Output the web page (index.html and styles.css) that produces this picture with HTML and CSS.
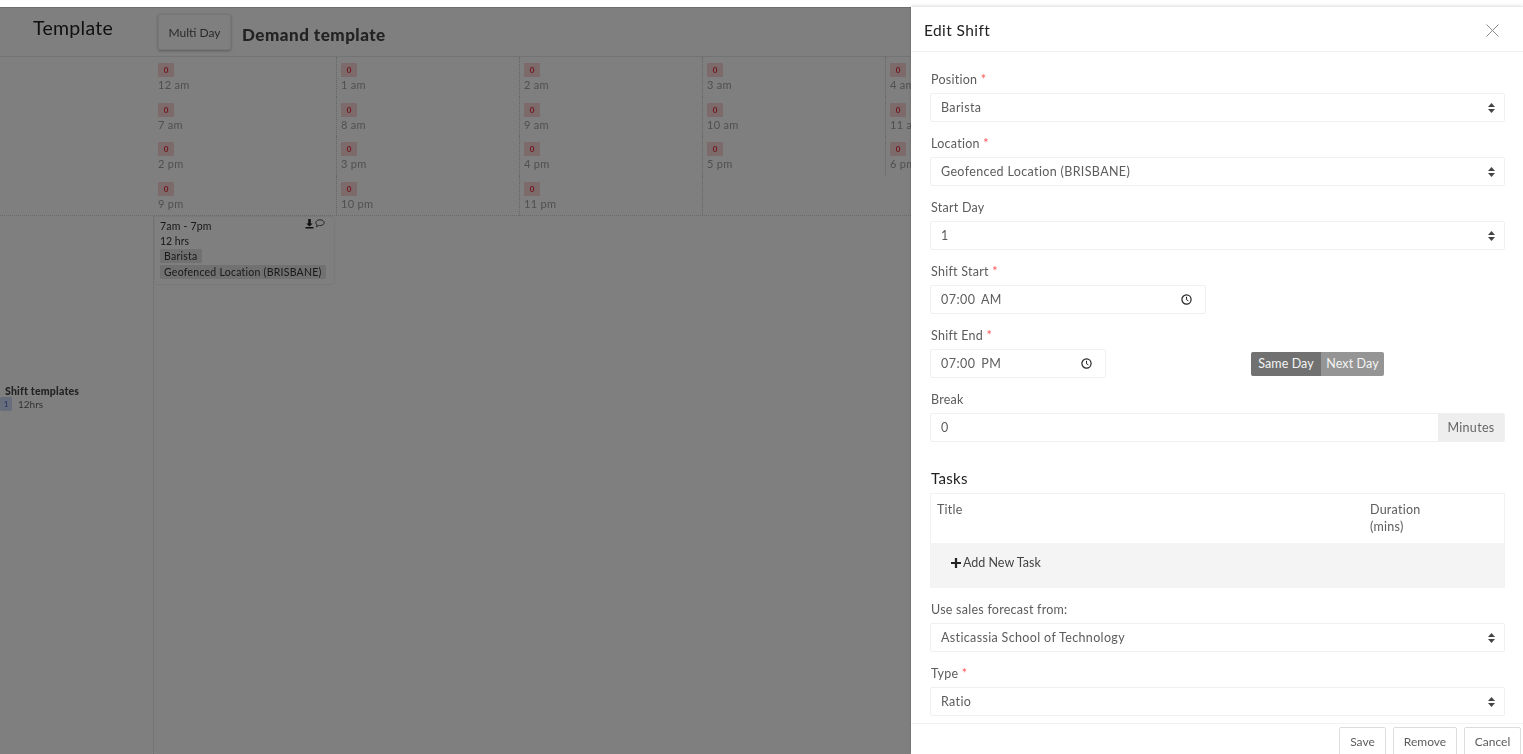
FILE: index.html
```html
<!DOCTYPE html>
<html lang="en">
<head>
    <meta charset="UTF-8">
    <title>Demand template</title>
    <link rel="stylesheet" href="styles.css">
</head>
<body>
<div class="topbar"></div>

<div class="page">
    <div class="head-row">
        <div class="head-title">Template</div>
        <div class="head-main">
            <button class="multi-btn">Multi Day</button>
            <div class="demand-title">Demand template</div>
        </div>
    </div>

    <div class="hours-row">
        <div class="side-cell"></div>
        <div class="hours-grid">
            <div class="hour"><span class="count">0</span><span class="hour-label">12 am</span></div>
            <div class="hour"><span class="count">0</span><span class="hour-label">1 am</span></div>
            <div class="hour"><span class="count">0</span><span class="hour-label">2 am</span></div>
            <div class="hour"><span class="count">0</span><span class="hour-label">3 am</span></div>
            <div class="hour"><span class="count">0</span><span class="hour-label">4 am</span></div>
            <div class="hour"><span class="count">0</span><span class="hour-label">7 am</span></div>
            <div class="hour"><span class="count">0</span><span class="hour-label">8 am</span></div>
            <div class="hour"><span class="count">0</span><span class="hour-label">9 am</span></div>
            <div class="hour"><span class="count">0</span><span class="hour-label">10 am</span></div>
            <div class="hour"><span class="count">0</span><span class="hour-label">11 am</span></div>
            <div class="hour"><span class="count">0</span><span class="hour-label">2 pm</span></div>
            <div class="hour"><span class="count">0</span><span class="hour-label">3 pm</span></div>
            <div class="hour"><span class="count">0</span><span class="hour-label">4 pm</span></div>
            <div class="hour"><span class="count">0</span><span class="hour-label">5 pm</span></div>
            <div class="hour"><span class="count">0</span><span class="hour-label">6 pm</span></div>
            <div class="hour"><span class="count">0</span><span class="hour-label">9 pm</span></div>
            <div class="hour"><span class="count">0</span><span class="hour-label">10 pm</span></div>
            <div class="hour"><span class="count">0</span><span class="hour-label">11 pm</span></div>
        </div>
    </div>

    <div class="shift-row">
        <div class="templates-cell">
            <div class="templates-title">Shift templates</div>
            <div class="templates-item"><span class="tpl-count">1</span>12hrs</div>
        </div>
        <div class="shift-area">
            <div class="shift-card">
                <div class="shift-time">
                    7am - 7pm
                    <span class="shift-icons">
                        <svg width="9" height="10" viewBox="0 0 9 10"><path d="M3.200 0h2.600v4.500h2L4.500 7.500 1.200 4.500h2zM0.500 8h8v1.500h-8z" fill="#222"/></svg>
                        <svg width="10" height="9" viewBox="0 0 10 9"><path d="M5 .8c2.300 0 4.200 1.300 4.200 2.900S7.300 6.600 5 6.600c-.5 0-1 0-1.400-.2L1.500 8l.5-2.100C1.200 5.300.8 4.600.8 3.700.8 2.100 2.700.8 5 .8z" fill="none" stroke="#222" stroke-width=".8"/></svg>
                    </span>
                </div>
                <div class="shift-hrs">12 hrs</div>
                <span class="shift-tag">Barista</span>
                <span class="shift-tag">Geofenced Location (BRISBANE)</span>
            </div>
        </div>
    </div>
</div>

<div class="overlay"></div>

<div class="drawer">
    <div class="drawer-head">
        <div class="drawer-title">Edit Shift</div>
        <svg class="close-x" width="13" height="13" viewBox="0 0 13 13"><path d="M.5.500l12 12M12.500.500l-12 12" stroke="#8a8a8a" stroke-width="1" fill="none"/></svg>
    </div>

    <div class="drawer-body">
        <div class="field">
            <label class="field-label">Position <span class="req">*</span></label>
            <div class="control">Barista
                <svg class="updown" width="7" height="10" viewBox="0 0 7 10"><path d="M3.500 0L7 4H0zM3.500 10L0 6h7z" fill="#444"/></svg>
            </div>
        </div>
        <div class="field">
            <label class="field-label">Location <span class="req">*</span></label>
            <div class="control">Geofenced Location (BRISBANE)
                <svg class="updown" width="7" height="10" viewBox="0 0 7 10"><path d="M3.500 0L7 4H0zM3.500 10L0 6h7z" fill="#444"/></svg>
            </div>
        </div>
        <div class="field">
            <label class="field-label">Start Day</label>
            <div class="control">1
                <svg class="updown" width="7" height="10" viewBox="0 0 7 10"><path d="M3.500 0L7 4H0zM3.500 10L0 6h7z" fill="#444"/></svg>
            </div>
        </div>
        <div class="field">
            <label class="field-label">Shift Start <span class="req">*</span></label>
            <div class="control time-start">07:00 AM
                <svg class="clock" width="11" height="11" viewBox="0 0 11 11"><circle cx="5.500" cy="5.500" r="4.600" fill="none" stroke="#222" stroke-width="1.200"/><path d="M5.500 2.800v2.900l1.900 1.200" fill="none" stroke="#222" stroke-width="1"/></svg>
            </div>
        </div>
        <div class="field">
            <label class="field-label">Shift End <span class="req">*</span></label>
            <div class="end-row">
                <div class="control time-end">07:00 PM
                    <svg class="clock" width="11" height="11" viewBox="0 0 11 11"><circle cx="5.500" cy="5.500" r="4.600" fill="none" stroke="#222" stroke-width="1.200"/><path d="M5.500 2.800v2.900l1.900 1.200" fill="none" stroke="#222" stroke-width="1"/></svg>
                </div>
                <div class="day-toggle">
                    <span class="day-on">Same Day</span>
                    <span class="day-off">Next Day</span>
                </div>
            </div>
        </div>
        <div class="field">
            <label class="field-label">Break</label>
            <div class="input-group">
                <div class="group-value">0</div>
                <div class="group-addon">Minutes</div>
            </div>
        </div>

        <h3 class="tasks-title">Tasks</h3>
        <div class="tasks-table">
            <div class="tasks-head">
                <div>Title</div>
                <div class="tasks-duration">Duration<br>(mins)</div>
            </div>
            <div class="tasks-add">
                <svg width="10" height="10" viewBox="0 0 10 10"><path d="M5 0v10M0 5h10" stroke="#222" stroke-width="2.200"/></svg>
                Add New Task
            </div>
        </div>

        <div class="field">
            <label class="field-label">Use sales forecast from:</label>
            <div class="control">Asticassia School of Technology
                <svg class="updown" width="7" height="10" viewBox="0 0 7 10"><path d="M3.500 0L7 4H0zM3.500 10L0 6h7z" fill="#444"/></svg>
            </div>
        </div>
        <div class="field">
            <label class="field-label">Type <span class="req">*</span></label>
            <div class="control">Ratio
                <svg class="updown" width="7" height="10" viewBox="0 0 7 10"><path d="M3.500 0L7 4H0zM3.500 10L0 6h7z" fill="#444"/></svg>
            </div>
        </div>
    </div>

    <div class="drawer-foot">
        <button class="foot-btn save-btn">Save</button>
        <button class="foot-btn remove-btn">Remove</button>
        <button class="foot-btn cancel-btn">Cancel</button>
    </div>
</div>
</body>
</html>
```

FILE: styles.css
```css
html, body {
    height: 100%;
}

body {
    margin: 0;
    overflow: hidden;
    position: relative;
    background: #fff;
    color: #333;
    font-family: Lato, "Noto Sans", sans-serif;
    font-size: 13px;
    display: flex;
    flex-direction: column;
    filter: blur(.4px);
}

.topbar {
    height: 7px;
    flex: none;
    background: #fff;
}

/* the drawer covers the rest of the page, so stop at its edge */
.page {
    flex: 1;
    display: flex;
    flex-direction: column;
    min-height: 0;
    margin-right: 612px;
    overflow: hidden;
    border-top: 1px solid #ddd;
}

/* header */
.head-row {
    display: flex;
    height: 48px;
    flex: none;
    border-bottom: 1px solid #e6e6e6;
}

.head-title {
    width: 154px;
    flex: none;
    box-sizing: border-box;
    padding: 8px 0 0 33px;
    font-size: 19.500px;
    letter-spacing: .3px;
    color: #222;
}

.head-main {
    display: flex;
    padding: 6px 0 0 4px;
    gap: 11px;
}

.multi-btn {
    width: 73px;
    height: 36px;
    padding: 0;
    font: inherit;
    font-size: 12px;
    color: #555;
    background: #fff;
    border: 1px solid #eee;
    border-radius: 2px;
    box-shadow: 0 1px 3px rgba(0, 0, 0, .3);
}

.demand-title {
    padding-top: 10px;
    font-size: 17px;
    font-weight: 900;
    letter-spacing: .5px;
    color: #444;
}

/* hours */
.hours-row {
    display: flex;
    flex: none;
    height: 159px;
    box-sizing: border-box;
    border-bottom: 1px dotted #d4d4d4;
}

.side-cell {
    width: 154px;
    flex: none;
}

.hours-grid {
    display: grid;
    grid-template-columns: repeat(5, 183px);
    grid-auto-rows: 39.700px;
    flex: none;
}

.hour {
    display: flex;
    flex-direction: column;
    align-items: flex-start;
    box-sizing: border-box;
    padding: 6px 0 0 4px;
    border-right: 1px dotted #c8c8c8;
}

.count {
    width: 16px;
    height: 14px;
    line-height: 14px;
    text-align: center;
    font-size: 8px;
    font-weight: 700;
    color: #e0303a;
    background: #fbd5d7;
    border-radius: 1px;
}

.hour-label {
    font-size: 11px;
    line-height: 15px;
    color: #a0a0a0;
    letter-spacing: .3px;
}

/* shift row */
.shift-row {
    flex: 1;
    display: flex;
}

.templates-cell {
    width: 154px;
    flex: none;
    box-sizing: border-box;
    padding-top: 169px;
    border-right: 1px dotted #d4d4d4;
}

.templates-title {
    padding-left: 5px;
    font-size: 10.500px;
    font-weight: 900;
    letter-spacing: .2px;
    color: #444;
}

.templates-item {
    display: flex;
    align-items: center;
    font-size: 10px;
    color: #666;
}

.tpl-count {
    width: 12px;
    height: 14px;
    line-height: 14px;
    margin: 0 6px 0 0;
    text-align: center;
    font-size: 8px;
    color: #3a5fc8;
    background: #cfdaf6;
    border-radius: 2px;
}

.shift-area {
    padding: 1px 0 0 1px;
}

.shift-card {
    width: 179px;
    height: 67px;
    box-sizing: border-box;
    padding: 2px 5px 0;
    font-size: 10.500px;
    color: #333;
    border-radius: 2px;
    box-shadow: 0 0 2px rgba(0, 0, 0, .2);
}

.shift-time {
    display: flex;
    justify-content: space-between;
    height: 15px;
    line-height: 15px;
    letter-spacing: .2px;
}

.shift-icons {
    display: flex;
    gap: 1px;
    padding-right: 4px;
}

.shift-hrs {
    height: 15px;
    line-height: 15px;
}

.shift-tag {
    display: table;
    height: 14px;
    line-height: 14px;
    margin-bottom: 2px;
    padding: 0 4px;
    background: #e2e2e2;
    border-radius: 1px;
    letter-spacing: .25px;
}

/* modal */
.overlay {
    position: absolute;
    inset: 7px 0 0 0;
    background: rgba(0, 0, 0, .5);
}

.drawer {
    position: absolute;
    top: 7px;
    right: 0;
    bottom: 0;
    width: 612px;
    display: flex;
    flex-direction: column;
    background: #fff;
    box-shadow: 0 -1px 3px rgba(0, 0, 0, .15);
}

.drawer-head {
    display: flex;
    align-items: center;
    justify-content: space-between;
    height: 45px;
    flex: none;
    box-sizing: border-box;
    padding: 2px 24px 0 13px;
    border-bottom: 1px solid #f0f0f0;
}

.drawer-title {
    font-size: 15.500px;
    letter-spacing: .4px;
    color: #222;
}

.drawer-body {
    flex: 1;
    min-height: 0;
    overflow: hidden;
    padding: 20px 18px 0 19px;
}

.field {
    margin-bottom: 14px;
}

.field-label {
    display: block;
    height: 21px;
    padding-left: 1px;
    line-height: 16px;
    font-size: 12.500px;
    letter-spacing: .25px;
    color: #5c5c5c;
}

.req {
    color: #f55;
}

.control {
    display: flex;
    align-items: center;
    justify-content: space-between;
    height: 29px;
    box-sizing: border-box;
    padding: 0 9px 0 10px;
    font-size: 12.500px;
    letter-spacing: .35px;
    color: #5c5c5c;
    border: 1px solid #f0f0f0;
    border-radius: 2px;
}

.time-start {
    width: 276px;
    padding-right: 13px;
    letter-spacing: .5px;
    word-spacing: 2px;
}

.end-row {
    display: flex;
    align-items: center;
}

.time-end {
    width: 176px;
    padding-right: 13px;
    letter-spacing: .5px;
    word-spacing: 2px;
}

.day-toggle {
    display: flex;
    margin-left: 145px;
    height: 24px;
    line-height: 24px;
    font-size: 12.500px;
    letter-spacing: .1px;
    color: #f4f4f4;
    border-radius: 2px;
    overflow: hidden;
}

.day-on {
    width: 70px;
    text-align: center;
    background: #717171;
}

.day-off {
    width: 63px;
    text-align: center;
    background: #959595;
}

.input-group {
    display: flex;
    height: 29px;
    border: 1px solid #f0f0f0;
    border-radius: 2px;
    box-sizing: border-box;
}

.group-value {
    flex: 1;
    padding-left: 10px;
    line-height: 27px;
    letter-spacing: .3px;
    font-size: 12.500px;
    color: #5c5c5c;
}

.group-addon {
    width: 66px;
    line-height: 27px;
    text-align: center;
    font-size: 12.500px;
    letter-spacing: .3px;
    color: #666;
    background: #eee;
}

.tasks-title {
    margin: 28px 0 6px;
    padding-left: 1px;
    height: 17px;
    line-height: 17px;
    font-size: 15px;
    font-weight: 400;
    letter-spacing: .3px;
    color: #222;
}

.tasks-table {
    margin-bottom: 14px;
    border: 1px solid #f2f2f2;
    box-sizing: border-box;
    height: 95px;
    display: flex;
    flex-direction: column;
}

.tasks-head {
    display: flex;
    justify-content: space-between;
    height: 49px;
    box-sizing: border-box;
    padding: 7px 0 0 6px;
    line-height: 17px;
    font-size: 12.500px;
    letter-spacing: .25px;
    color: #5c5c5c;
}

.tasks-duration {
    width: 134px;
}

.tasks-add {
    flex: 1;
    display: flex;
    align-items: center;
    gap: 2px;
    padding: 0 0 5px 20px;
    font-size: 12.500px;
    color: #444;
    background: #f4f4f4;
}

.drawer-foot {
    display: flex;
    justify-content: flex-end;
    gap: 7px;
    height: 31px;
    flex: none;
    box-sizing: border-box;
    padding: 3px 2px 0 0;
    border-top: 1px solid #f2f2f2;
}

.foot-btn {
    height: 40px;
    padding: 0 0 11px;
    font: inherit;
    font-size: 12px;
    color: #5c5c5c;
    background: #fff;
    border: 1px solid #ddd;
    border-radius: 2px;
}

.save-btn {
    width: 47px;
}

.remove-btn {
    width: 64px;
}

.cancel-btn {
    width: 57px;
}
```
